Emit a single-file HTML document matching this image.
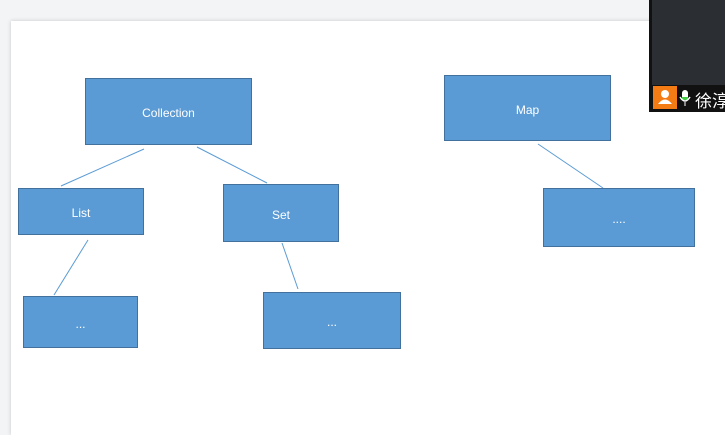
<!DOCTYPE html>
<html><head><style>
body{margin:0;width:725px;height:435px;background:#f3f4f6;position:relative;overflow:hidden;font-family:"Liberation Sans",sans-serif}
.page{position:absolute;left:11px;top:21px;width:714px;height:414px;background:#fff;box-shadow:0 0 4px rgba(0,0,0,.18)}
.b{position:absolute;background:#5b9bd5;border:1px solid #41719c;box-sizing:border-box;color:#fff;font-size:12px;display:flex;align-items:center;justify-content:center;padding-top:3px}
svg{position:absolute;left:0;top:0}
.dark{position:absolute;left:649px;top:0;width:76px;height:112px;background:#111}
.inner{position:absolute;left:3px;top:0;width:73px;height:85px;background:#2b2f33}
.or{position:absolute;left:4px;top:86px;width:24px;height:23px;background:#f57c14}
</style></head><body>
<div class="page"></div>
<svg width="725" height="435"><g stroke="#5b9bd5" stroke-width="1">
<line x1="144" y1="149" x2="61" y2="186"/><line x1="197" y1="147" x2="267" y2="183"/>
<line x1="88" y1="240" x2="54" y2="295"/><line x1="282" y1="243" x2="298" y2="289"/>
<line x1="538" y1="144" x2="603" y2="188"/></g></svg>
<div class="b" style="left:85px;top:78px;width:167px;height:67px">Collection</div>
<div class="b" style="left:444px;top:75px;width:167px;height:66px">Map</div>
<div class="b" style="left:18px;top:188px;width:126px;height:47px">List</div>
<div class="b" style="left:223px;top:184px;width:116px;height:58px">Set</div>
<div class="b" style="left:23px;top:296px;width:115px;height:52px">...</div>
<div class="b" style="left:263px;top:292px;width:138px;height:57px">...</div>
<div class="b" style="left:543px;top:188px;width:152px;height:59px">....</div>
<div class="dark"><div class="inner"></div>
<div class="or"><svg width="24" height="23"><circle cx="12" cy="8" r="4" fill="#fff"/><path d="M5 18 Q12 9 19 18Z" fill="#fff"/></svg></div>
<svg style="left:30px;top:89px" width="12" height="18"><rect x="3" y="1" width="6" height="10" rx="3" fill="#fff"/><rect x="3" y="8" width="6" height="3" fill="#4c4"/><path d="M1 8 Q6 16 11 8" stroke="#fff" fill="none" stroke-width="1.5"/><line x1="6" y1="13" x2="6" y2="17" stroke="#fff"/></svg>
<div style="position:absolute;left:46px;top:87px;color:#fff;font-size:17px;font-family:'Liberation Sans','Noto Sans CJK SC',sans-serif;white-space:nowrap">徐淳</div>
</div>
</body></html>
